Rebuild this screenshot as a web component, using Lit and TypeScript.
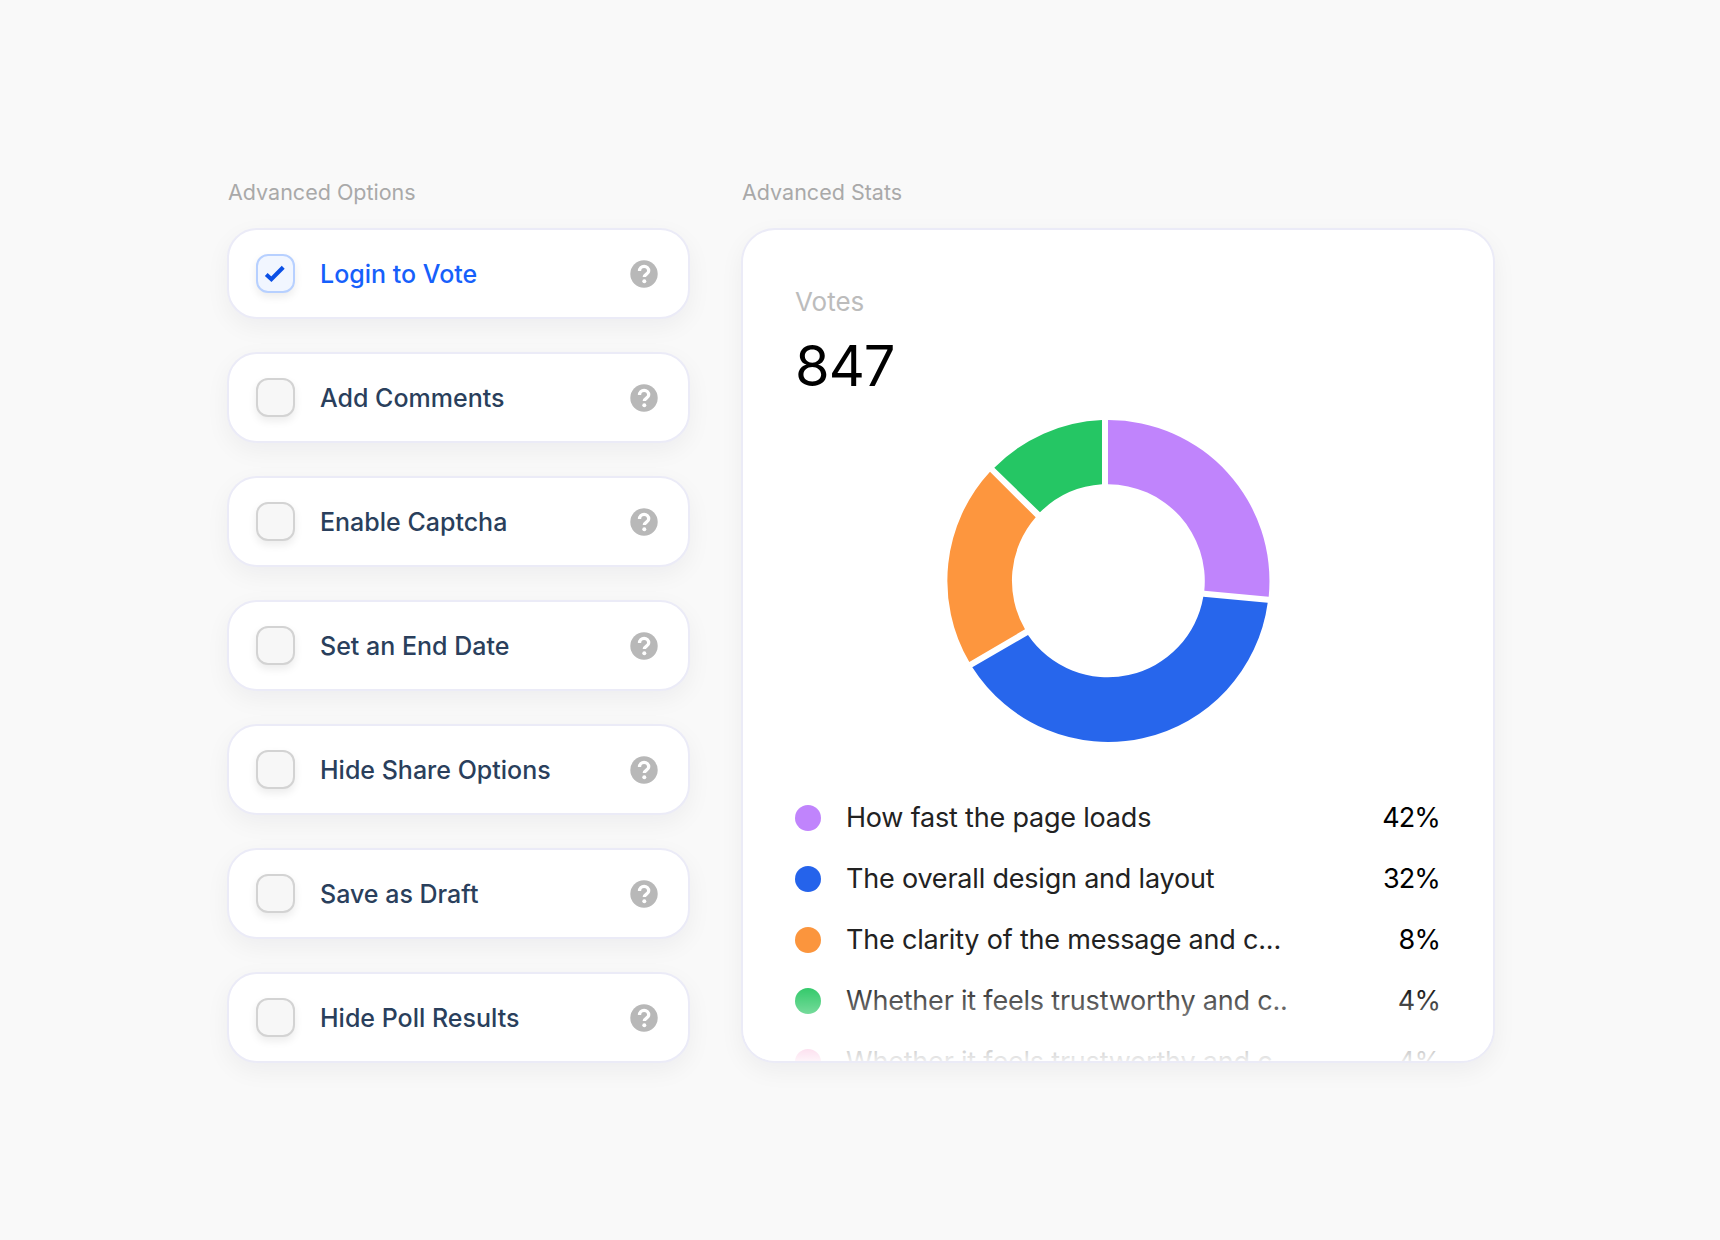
import { LitElement, html, css, svg } from "lit";
import { customElement } from "lit/decorators.js";
import { classMap } from "lit/directives/class-map.js";

const options = [
  { label: "Login to Vote", checked: true },
  { label: "Add Comments", checked: false },
  { label: "Enable Captcha", checked: false },
  { label: "Set an End Date", checked: false },
  { label: "Hide Share Options", checked: false },
  { label: "Save as Draft", checked: false },
  { label: "Hide Poll Results", checked: false },
];

const legend = [
  { label: "How fast the page loads", value: "42%", color: "#c084fc" },
  { label: "The overall design and layout", value: "32%", color: "#2563eb" },
  { label: "The clarity of the message and c...", value: "8%", color: "#fb953d" },
  { label: "Whether it feels trustworthy and c..", value: "4%", color: "#22c55e" },
  { label: "Whether it feels trustworthy and c..", value: "4%", color: "#f472b6" },
];

// slices are measured off the design, the gaps between them are not even
const slices = [
  { color: "#c084fc", d: "M0 -161A161 161 0 0 1 160.7 15.7L96.3 9.7A96.7 96.7 0 0 0 0 -96.7Z" },
  { color: "#2766ec", d: "M159.7 21.7A161 161 0 0 1 -135.7 86.3L-80 54A96.7 96.7 0 0 0 95.3 15.7Z" },
  { color: "#fd963e", d: "M-138.7 81A161 161 0 0 1 -118 -109.3L-72.3 -63.7A96.7 96.7 0 0 0 -83 48.3Z" },
  { color: "#25c664", d: "M-113.7 -113.3A161 161 0 0 1 -6 -161L-6 -96.7A96.7 96.7 0 0 0 -68 -68.7Z" },
];

@customElement("app-root")
class AppRoot extends LitElement {
  static override styles = css`
    :host {
      display: block;
      min-height: 1240px;
      background: #f9f9f9;
      font-family: Inter, "Liberation Sans", sans-serif;
    }

    .page {
      display: flex;
      gap: 51px;
      padding: 177px 0 0 227px;
    }

    .options {
      width: 463px;
    }

    .stats {
      width: 754px;
    }

    h2 {
      margin: 0 0 21px 1px;
      font-size: 21.5px;
      line-height: 30px;
      font-weight: 400;
      color: #a9a9a9;
    }

    .list {
      display: flex;
      flex-direction: column;
      gap: 33px;
    }

    .row {
      display: flex;
      align-items: center;
      box-sizing: border-box;
      height: 91px;
      padding: 0 30px 0 27px;
      background: #fff;
      border: 2px solid #ebebf7;
      border-radius: 30px;
      box-shadow: 0 8px 24px rgba(20, 20, 40, 0.05);
    }

    .box {
      display: flex;
      box-sizing: border-box;
      width: 39px;
      height: 39px;
      margin-right: 25px;
      flex: none;
      background: #f7f7f7;
      border: 2px solid #d3d3d3;
      border-radius: 12px;
      box-shadow: 0 4px 8px rgba(0, 0, 0, 0.08);
    }

    .row.on .box {
      background: #f1f6ff;
      border-color: #b7d0ff;
    }

    .label {
      flex: 1;
      font-size: 25px;
      line-height: 34px;
      font-weight: 450;
      color: #2a3f5c;
    }

    .row.on .label {
      color: #1660fb;
    }

    .help {
      display: block;
      width: 28px;
      height: 28px;
      flex: none;
    }

    .card {
      position: relative;
      box-sizing: border-box;
      height: 835px;
      padding: 57px 53px 0 52px;
      overflow: hidden;
      background: #fff;
      border: 2px solid #ebebf7;
      border-radius: 34px;
      box-shadow: 0 8px 24px rgba(20, 20, 40, 0.05);
    }

    .votes {
      font-size: 26px;
      line-height: 30px;
      color: #bcbcbc;
    }

    .total {
      margin-top: 15px;
      font-size: 56px;
      line-height: 68px;
      letter-spacing: -1px;
      color: #000;
    }

    .donut {
      display: block;
      width: 330px;
      height: 330px;
      margin: 16px 0 0 148px;
    }

    .legend {
      display: flex;
      flex-direction: column;
      margin-top: 41px;
    }

    .item {
      display: flex;
      align-items: center;
      height: 61px;
      flex: none;
      font-size: 27px;
    }

    .dot {
      width: 26px;
      height: 26px;
      margin-right: 25px;
      flex: none;
      border-radius: 50%;
    }

    .name {
      flex: 1;
      color: #222;
      letter-spacing: -0.2px;
      white-space: nowrap;
    }

    .value {
      color: #000;
      letter-spacing: -0.9px;
    }

    .fade {
      position: absolute;
      left: 0;
      right: 0;
      bottom: 0;
      height: 80px;
      background: linear-gradient(rgba(255, 255, 255, 0), rgba(255, 255, 255, 0.92));
      pointer-events: none;
    }
  `;

  renderHelp() {
    return html`<svg class="help" viewBox="0 0 28 28">
      <circle cx="14" cy="14" r="13.7" fill="#b8b8b8"></circle>
      <path d="M9.5 11a4.6 4.6 0 0 1 9.2 0c0 3-4.4 3.1-4.4 6" fill="none" stroke="#fff" stroke-width="3.3"></path>
      <circle cx="14.3" cy="21.3" r="2" fill="#fff"></circle>
    </svg>`;
  }

  renderCheck() {
    return html`<svg width="35" height="35" viewBox="0 0 34 34">
      <path d="M8 18l5 4.5L24.5 11" fill="none" stroke="#0b50e6" stroke-width="4"></path>
    </svg>`;
  }

  override render() {
    return html`
      <div class="page">
        <section class="options">
          <h2>Advanced Options</h2>
          <div class="list">
            ${options.map(
              (o) => html`
                <div class=${classMap({ row: true, on: o.checked })}>
                  <span class="box">${o.checked ? this.renderCheck() : ""}</span>
                  <span class="label">${o.label}</span>
                  ${this.renderHelp()}
                </div>
              `,
            )}
          </div>
        </section>
        <section class="stats">
          <h2>Advanced Stats</h2>
          <div class="card">
            <div class="votes">Votes</div>
            <div class="total">847</div>
            <svg class="donut" viewBox="-165 -165 330 330">
              ${slices.map((s) => svg`<path d=${s.d} fill=${s.color}></path>`)}
            </svg>
            <div class="legend">
              ${legend.map(
                (l) => html`
                  <div class="item">
                    <span class="dot" style="background: ${l.color}"></span>
                    <span class="name">${l.label}</span>
                    <span class="value">${l.value}</span>
                  </div>
                `,
              )}
            </div>
            <div class="fade"></div>
          </div>
        </section>
      </div>
    `;
  }
}

// Prevent tree-shaking
void AppRoot;
